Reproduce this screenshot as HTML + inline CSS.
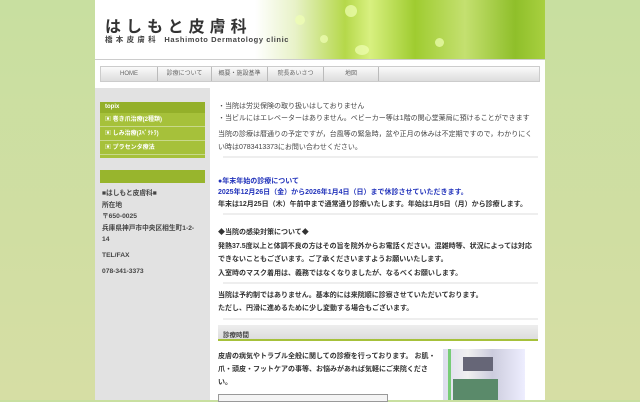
<!DOCTYPE html>
<html><head><meta charset="utf-8"><style>
*{margin:0;padding:0;box-sizing:border-box}
body{width:640px;height:400px;overflow:hidden;background:linear-gradient(#c8dfa0,#d6dea4);font-family:"Liberation Sans","Noto Sans CJK JP",sans-serif;position:relative}
.page{position:absolute;left:95px;top:0;width:450px;height:400px;background:#fff}
.hdr{position:absolute;left:0;top:0;width:450px;height:60px;background:linear-gradient(90deg,#fff 0,#fff 160px,#e8f2c8 200px,#b5d84a 250px,#d8f080 275px,#9fcc30 320px,#c4e070 370px,#8fbf2a 420px,#a8d040 450px);border-bottom:1px solid #ccc;overflow:hidden}
.hdr i{position:absolute;border-radius:50%;background:rgba(240,255,180,.7)}
.t1{position:absolute;left:10px;top:13px;font-size:16px;font-weight:bold;letter-spacing:5px;color:#333}
.t2{position:absolute;left:10px;top:34px;font-size:7.5px;color:#444;letter-spacing:.6px;font-weight:bold}
.nav{position:absolute;left:5px;top:66px;width:440px;height:16px;background:linear-gradient(#fafafa,#ddd);border:1px solid #ccc}
.nav span{position:absolute;font-size:6px;color:#666;text-align:center;border-right:1px solid #bbb;height:14px;top:0;line-height:15px}
.side{position:absolute;left:0;top:88px;width:115px;height:312px;background:#e2e2e2}
.tbox{position:absolute;left:5px;top:14px;width:105px;height:56px;background:#a6c13a}
.tbox div{height:14px;font-size:6px;color:#fff;font-weight:bold;padding-left:5px;line-height:14px;border-bottom:1px solid #c8d98a}
.tbox .h{height:11px;line-height:11px;background:#94b02a;border:none}
.bar{position:absolute;left:5px;top:82px;width:105px;height:13px;background:#98b52d}
.addr{position:absolute;left:7px;top:100px;font-size:6.7px;font-weight:bold;color:#444;line-height:11.5px}
.c{position:absolute;left:123px;font-size:7px;color:#444;white-space:nowrap}
.b{font-weight:bold;color:#333}
.blue{color:#2233bb;font-weight:bold}
.sep{position:absolute;left:128px;width:315px;height:2px;background:#eee}
.sh{position:absolute;left:123px;top:325px;width:320px;height:16px;background:linear-gradient(#eee,#ddd);border-bottom:2px solid #a6c13a;font-size:6.5px;font-weight:bold;color:#444;padding:4px 0 0 5px}
</style></head><body>
<div class="page">
<div class="hdr"><i style="left:200px;top:15px;width:10px;height:10px"></i><i style="left:225px;top:35px;width:8px;height:8px"></i><i style="left:250px;top:5px;width:12px;height:12px"></i><i style="left:340px;top:38px;width:9px;height:9px"></i><i style="left:260px;top:45px;width:14px;height:10px"></i>
<div class="t1">はしもと皮膚科</div><div class="t2">橋 本 皮 膚 科　Hashimoto Dermatology clinic</div></div>
<div class="nav"><span style="left:0;width:57px">HOME</span><span style="left:57px;width:54px">診療について</span><span style="left:111px;width:56px">概要・施設基準</span><span style="left:167px;width:56px">院長あいさつ</span><span style="left:223px;width:55px">地図</span></div>
<div class="side"><div class="tbox"><div class="h">topix</div><div>▣ 巻き爪治療(2種類)</div><div>▣ しみ治療(ｽﾍﾟｸﾄﾗ)</div><div>▣ プラセンタ療法</div></div>
<div class="bar"></div>
<div class="addr">■はしもと皮膚科■<br>所在地<br>〒650-0025<br>兵庫県神戸市中央区相生町1-2-<br>14<br><span style="line-height:20px">TEL/FAX</span><br>078-341-3373</div></div>
<div class="c" style="top:101px">・当院は労災保険の取り扱いはしておりません</div>
<div class="c" style="top:113px">・当ビルにはエレベーターはありません。ベビーカー等は1階の関心堂薬局に預けることができます</div>
<div class="c" style="top:128px;line-height:13px">当院の診療は暦通りの予定ですが，台風等の緊急時，盆や正月の休みは不定期ですので，わかりにく<br>い時は0783413373にお問い合わせください。</div>
<div class="sep" style="top:156px"></div>
<div class="c blue" style="top:176px">●年末年始の診療について</div>
<div class="c blue" style="top:187px">2025年12月26日（金）から2026年1月4日（日）まで休診させていただきます。</div>
<div class="c b" style="top:199px">年末は12月25日（木）午前中まで通常通り診療いたします。年始は1月5日（月）から診療します。</div>
<div class="sep" style="top:213px"></div>
<div class="c b" style="top:226px;line-height:13.5px">◆当院の感染対策について◆<br>発熱37.5度以上と体調不良の方はその旨を院外からお電話ください。混雑時等、状況によっては対応<br>できないこともございます。ご了承くださいますようお願いいたします。<br>入室時のマスク着用は、義務ではなくなりましたが、なるべくお願いします。</div>
<div class="sep" style="top:282px"></div>
<div class="c b" style="top:290px;line-height:12.5px">当院は予約制ではありません。基本的には来院順に診察させていただいております。<br>ただし、円滑に進めるために少し変動する場合もございます。</div>
<div class="sep" style="top:318px"></div>
<div class="sh">診療時間</div>
<div class="c b" style="top:350px;line-height:13px">皮膚の病気やトラブル全般に関しての診療を行っております。 お肌・<br>爪・頭皮・フットケアの事等、お悩みがあれば気軽にご来院くださ<br>い。</div>
<div style="position:absolute;left:123px;top:394px;width:170px;height:8px;border:1px solid #999;background:#f4f4f4"></div>
<div style="position:absolute;left:348px;top:349px;width:82px;height:51px;background:linear-gradient(90deg,#dde 0,#f0f0f0 30%,#ccd 60%,#eef 100%)"><div style="position:absolute;left:20px;top:8px;width:30px;height:14px;background:#667"></div><div style="position:absolute;left:10px;top:30px;width:45px;height:21px;background:#5a8a6a"></div><div style="position:absolute;left:5px;top:0;width:3px;height:51px;background:#7c7"></div></div>
</div>
</body></html>
